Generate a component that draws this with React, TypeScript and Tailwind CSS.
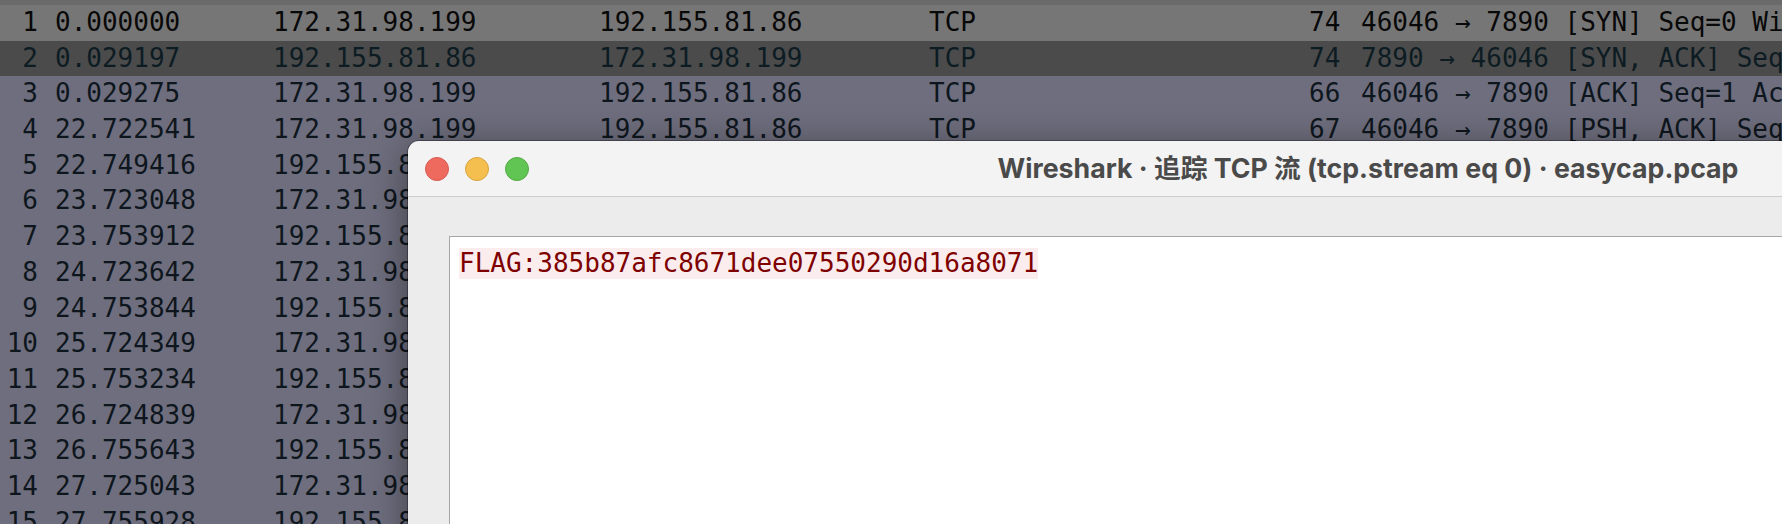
import React from "react";

type Row = {
  no: number;
  time: string;
  src: string;
  dst: string;
  proto: string;
  len: string;
  info: string;
};

const A = "172.31.98.199";
const B = "192.155.81.86";

const rows: Row[] = [
  { no: 1, time: "0.000000", src: A, dst: B, proto: "TCP", len: "74", info: "46046 → 7890 [SYN] Seq=0 Win=64240 Len=0 MSS=1460 SACK_PERM" },
  { no: 2, time: "0.029197", src: B, dst: A, proto: "TCP", len: "74", info: "7890 → 46046 [SYN, ACK] Seq=0 Ack=1 Win=65160 Len=0" },
  { no: 3, time: "0.029275", src: A, dst: B, proto: "TCP", len: "66", info: "46046 → 7890 [ACK] Seq=1 Ack=1 Win=64256 Len=0" },
  { no: 4, time: "22.722541", src: A, dst: B, proto: "TCP", len: "67", info: "46046 → 7890 [PSH, ACK] Seq=1 Ack=1 Win=64256 Len=1" },
  { no: 5, time: "22.749416", src: B, dst: A, proto: "TCP", len: "66", info: "7890 → 46046 [ACK] Seq=1 Ack=2 Win=65280 Len=0" },
  { no: 6, time: "23.723048", src: A, dst: B, proto: "TCP", len: "67", info: "46046 → 7890 [PSH, ACK] Seq=2 Ack=1 Win=64256 Len=1" },
  { no: 7, time: "23.753912", src: B, dst: A, proto: "TCP", len: "66", info: "7890 → 46046 [ACK] Seq=1 Ack=3 Win=65280 Len=0" },
  { no: 8, time: "24.723642", src: A, dst: B, proto: "TCP", len: "67", info: "46046 → 7890 [PSH, ACK] Seq=3 Ack=1 Win=64256 Len=1" },
  { no: 9, time: "24.753844", src: B, dst: A, proto: "TCP", len: "66", info: "7890 → 46046 [ACK] Seq=1 Ack=4 Win=65280 Len=0" },
  { no: 10, time: "25.724349", src: A, dst: B, proto: "TCP", len: "67", info: "46046 → 7890 [PSH, ACK] Seq=4 Ack=1 Win=64256 Len=1" },
  { no: 11, time: "25.753234", src: B, dst: A, proto: "TCP", len: "66", info: "7890 → 46046 [ACK] Seq=1 Ack=5 Win=65280 Len=0" },
  { no: 12, time: "26.724839", src: A, dst: B, proto: "TCP", len: "67", info: "46046 → 7890 [PSH, ACK] Seq=5 Ack=1 Win=64256 Len=1" },
  { no: 13, time: "26.755643", src: B, dst: A, proto: "TCP", len: "66", info: "7890 → 46046 [ACK] Seq=1 Ack=6 Win=65280 Len=0" },
  { no: 14, time: "27.725043", src: A, dst: B, proto: "TCP", len: "67", info: "46046 → 7890 [PSH, ACK] Seq=6 Ack=1 Win=64256 Len=1" },
  { no: 15, time: "27.755928", src: B, dst: A, proto: "TCP", len: "66", info: "7890 → 46046 [ACK] Seq=1 Ack=7 Win=65280 Len=0" },
];

function rowClass(no: number) {
  if (no === 1) return "bg-[#767676] text-[#080808]";
  if (no === 2) return "bg-[#4b4b4b] text-[#0d1c23]";
  return "bg-[#6f6e7e] text-[#0e161d]";
}

function PacketRow({ r }: { r: Row }) {
  return (
    <div className={`flex h-[35.7px] shrink-0 items-center whitespace-nowrap leading-[35.7px] ${rowClass(r.no)}`}>
      <span className="w-[38px] shrink-0 text-right">{r.no}</span>
      <span className="ml-[17px] w-[218px] shrink-0">{r.time}</span>
      <span className="w-[326px] shrink-0">{r.src}</span>
      <span className="w-[330px] shrink-0">{r.dst}</span>
      <span className="w-[380px] shrink-0">{r.proto}</span>
      <span className="w-[52px] shrink-0">{r.len}</span>
      <span className="shrink-0">{r.info}</span>
    </div>
  );
}

export default function App() {
  return (
    <div className="relative h-[524px] w-[1782px] overflow-hidden bg-[#6f6e7e] font-['DejaVu_Sans_Mono',monospace] text-[26px]">
      <div className="flex flex-col">
        <div className="h-[5px] shrink-0 bg-[#6a6a6a]" />
        {rows.map((r) => (
          <PacketRow key={r.no} r={r} />
        ))}
      </div>

      <div className="absolute left-[408px] top-[141px] flex h-[460px] w-[1920px] flex-col overflow-hidden rounded-[11px] shadow-[0_8px_40px_rgba(0,0,0,0.45)] ring-1 ring-black/30">
        <div className="relative flex h-[56px] shrink-0 items-center justify-center border-b border-[#cdcdcd] bg-[#f3f3f3]">
          <div className="absolute left-[17px] top-1/2 flex -translate-y-1/2 gap-[16px]">
            <span className="h-[24px] w-[24px] rounded-full border border-[#d65b50] bg-[#ee6a5f]" />
            <span className="h-[24px] w-[24px] rounded-full border border-[#d8a340] bg-[#f5bf4f]" />
            <span className="h-[24px] w-[24px] rounded-full border border-[#52aa43] bg-[#61c554]" />
          </div>
          <span className="font-['Inter','Noto_Sans_CJK_SC',sans-serif] text-[26.7px] font-bold text-[#4a4a4a]">
            Wireshark · 追踪 TCP 流 (tcp.stream eq 0) · easycap.pcap
          </span>
        </div>
        <div className="flex-1 bg-[#ececec] pl-[41px] pt-[39px]">
          <div className="h-[400px] border border-[#a6a6a6] bg-white pl-[9px] pt-[7px]">
            <span className="inline-block bg-[#fbeded] font-['DejaVu_Sans_Mono',monospace] text-[26px] leading-[31px] text-[#7f0000]">
              FLAG:385b87afc8671dee07550290d16a8071
            </span>
          </div>
        </div>
      </div>
    </div>
  );
}
